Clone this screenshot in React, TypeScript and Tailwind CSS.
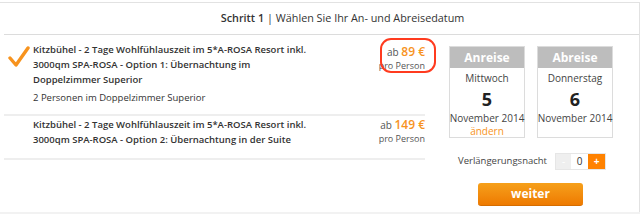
import React from "react";

function Check() {
  return (
    <svg width="22" height="22" viewBox="0 0 22 22" className="block">
      <path d="M2 12 L8 19 L20 2" fill="none" stroke="#f7931e" strokeWidth="3.4" strokeLinecap="round" strokeLinejoin="round" />
    </svg>
  );
}

function Price({ value }: { value: string }) {
  return (
    <div className="text-right leading-[14px] whitespace-nowrap">
      <div className="text-[10px] text-[#555]">
        ab <span className="text-[12px] font-semibold text-[#f7931e]">{value} €</span>
      </div>
      <div className="text-[9px] text-[#555]">pro Person</div>
    </div>
  );
}

function DateBox({ label, day, num, change }: { label: string; day: string; num: string; change?: boolean }) {
  return (
    <div className="w-[76px] h-[92px] border border-[#dcdcdc] flex flex-col items-center bg-white whitespace-nowrap">
      <div className="w-full h-[21px] bg-[#bdbdbd] text-white font-bold text-[12px] flex items-center justify-center">{label}</div>
      <div className="text-[10px] text-[#444] mt-[3px] leading-[14px]">{day}</div>
      <div className="text-[18px] font-bold text-[#222] leading-[22px] mt-[3px]">{num}</div>
      <div className="text-[10px] text-[#444] leading-[14px] mt-[1px]">November 2014</div>
      {change && <div className="text-[10px] text-[#f7931e] leading-[12px]">ändern</div>}
    </div>
  );
}

export default function App() {
  return (
    <div className="w-[640px] h-[214px] bg-white overflow-hidden flex flex-col" style={{ fontFamily: "'Open Sans', sans-serif" }}>
      <div className="mt-[2px] h-[210px] border-t border-r border-[#e2e2e2] flex flex-col text-[#333]">
        <div className="ml-[4px] pl-[42px] h-[32px] border-b border-[#dcdcdc] flex items-center justify-center text-[10.8px] text-[#333]">
          <span className="font-semibold">Schritt 1</span>
          <span className="ml-[3px]">| Wählen Sie Ihr An- und Abreisedatum</span>
        </div>
        <div className="flex">
          <div className="ml-[4px] w-[421px] flex flex-col">
            <div className="relative flex pt-[7px] pb-[9px] border-b-2 border-[#eeeeee]">
              <div className="w-[29px] pl-[4px] pt-[4px]">
                <Check />
              </div>
              <div className="flex-1 pr-[10px]">
                <div className="text-[9.5px] font-semibold leading-[15px] w-[280px]">
                  Kitzbühel - 2 Tage Wohlfühlauszeit im 5*A-ROSA Resort inkl. 3000qm SPA-ROSA - Option 1: Übernachtung im Doppelzimmer Superior
                </div>
                <div className="text-[9.5px] leading-[15px] mt-[3px]">2 Personen im Doppelzimmer Superior</div>
              </div>
              <div className="pt-[3px]">
                <Price value="89" />
              </div>
              <div className="absolute left-[376px] top-[3px] w-[56px] h-[35px] border-2 border-[#ff3b1f] rounded-[11px]" />
            </div>
            <div className="flex pt-[1px] pb-[11px] border-b-2 border-[#eeeeee]">
              <div className="w-[29px]" />
              <div className="flex-1 pr-[10px]">
                <div className="text-[9.5px] font-semibold leading-[15px] w-[280px]">
                  Kitzbühel - 2 Tage Wohlfühlauszeit im 5*A-ROSA Resort inkl. 3000qm SPA-ROSA - Option 2: Übernachtung in der Suite
                </div>
              </div>
              <div className="pt-[1px]">
                <Price value="149" />
              </div>
            </div>
          </div>
          <div className="flex flex-col ml-[24px] pt-[11px]">
            <div className="flex gap-[12px]">
              <DateBox label="Anreise" day="Mittwoch" num="5" change />
              <DateBox label="Abreise" day="Donnerstag" num="6" />
            </div>
            <div className="flex items-center justify-end mt-[15px] mr-[7px]">
              <span className="text-[9.5px] text-[#444] mr-[8px]">Verlängerungsnacht</span>
              <div className="flex h-[17px] border border-[#e6e6e6]">
                <div className="w-[15px] bg-[#efefef] text-white text-[10px] flex items-center justify-center">-</div>
                <div className="w-[17px] bg-white text-[10px] flex items-center justify-center">0</div>
                <div className="w-[17px] bg-[#ff8200] text-white text-[10px] font-bold flex items-center justify-center">+</div>
              </div>
            </div>
            <div className="flex mt-[13px] ml-[29px]">
              <div className="w-[105px] h-[23px] rounded-[3px] bg-gradient-to-b from-[#f6a01a] to-[#ee7a00] border-b border-[#d56d00] text-white font-bold text-[12px] flex items-center justify-center">
                weiter
              </div>
            </div>
          </div>
        </div>
      </div>
      <div className="flex-1 bg-[#f2f2f2]" />
    </div>
  );
}
